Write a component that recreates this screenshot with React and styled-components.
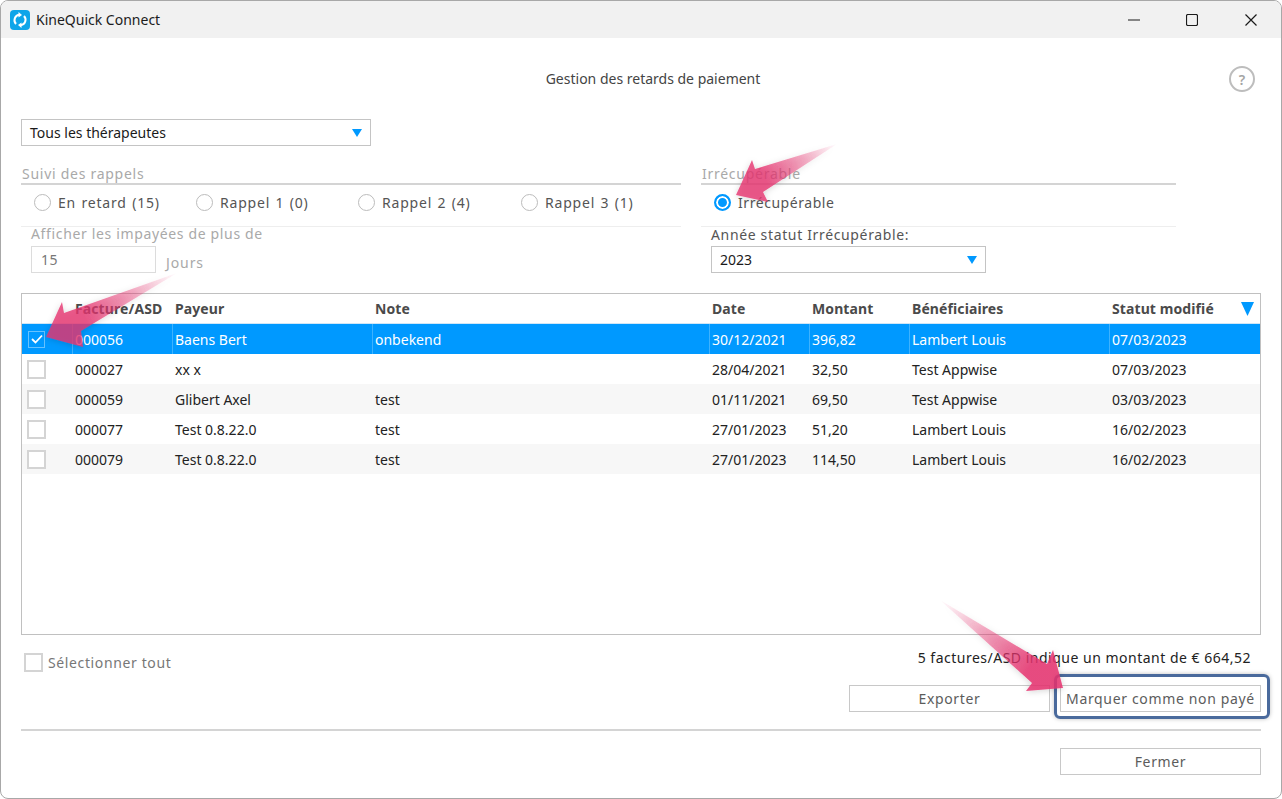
import React from 'react';
import styled, { createGlobalStyle } from 'styled-components';

const GlobalStyle = createGlobalStyle`
  html, body {
    margin: 0;
    padding: 0;
    background: #fff;
  }
  * {
    box-sizing: border-box;
  }
`;

const Win = styled.div`
  position: relative;
  width: 1282px;
  height: 799px;
  background: #fff;
  border: 1px solid #a8a8a8;
  border-radius: 8px;
  overflow: hidden;
  font-family: "Noto Sans", "Open Sans", sans-serif;
  font-size: 14px;
  color: #222;
`;

const TitleBar = styled.div`
  display: flex;
  align-items: center;
  height: 37px;
  padding-left: 9px;
  background: #f1f1f1;
`;

const AppName = styled.div`
  margin-left: 6px;
  font-size: 14px;
  color: #1c1c1c;
`;

const WinButtons = styled.div`
  display: flex;
  margin-left: auto;
  margin-right: 1px;
`;

const WinButton = styled.div`
  display: flex;
  align-items: center;
  justify-content: center;
  width: ${(p) => p.$width}px;
  height: 37px;
`;

const Body = styled.div`
  padding: 0 20px;
`;

const Heading = styled.div`
  position: relative;
  display: flex;
  justify-content: center;
  align-items: center;
  height: 20px;
  margin-top: 30px;
  padding-left: 24px;
  font-size: 14px;
  color: #444;
`;

const Help = styled.div`
  position: absolute;
  right: 6px;
  top: -2px;
  display: flex;
  align-items: center;
  justify-content: center;
  width: 26px;
  height: 26px;
  border: 2px solid #bdbdbd;
  border-radius: 50%;
  font-size: 14px;
  font-weight: 600;
  color: #a4a4a4;
`;

const Select = styled.div`
  display: flex;
  align-items: center;
  justify-content: space-between;
  width: ${(p) => p.$width}px;
  height: 27px;
  padding: 0 8px;
  background: #fff;
  border: 1px solid #c4c4c4;
  font-size: 14px;
  color: #1a1a1a;
`;

const Caret = styled.svg`
  display: block;
  flex: none;
`;

const TopSelect = styled.div`
  margin-top: 31px;
`;

const Filters = styled.div`
  display: flex;
  gap: 20px;
  margin-top: 18px;
  height: 109px;
`;

const Group = styled.div`
  width: ${(p) => p.$width}px;
`;

const GroupTitle = styled.div`
  height: 21px;
  padding-left: 1px;
  border-bottom: 2px solid #d4d4d4;
  font-size: 14px;
  line-height: 19px;
  letter-spacing: 0.73px;
  color: #a9a9a9;
`;

const RadioRow = styled.div`
  display: flex;
  align-items: center;
  height: 42px;
  padding: 0 0 6px 13px;
  border-bottom: 1px solid #eeeeee;
`;

const RadioItem = styled.div`
  display: flex;
  align-items: center;
  gap: 7px;
  width: ${(p) => p.$width}px;
  font-size: 14px;
  letter-spacing: ${(p) => (p.$wide ? '0.8px' : '0.55px')};
  word-spacing: ${(p) => (p.$wide ? '1px' : '0')};
  color: #555;
`;

const RadioDot = styled.span`
  display: block;
  flex: none;
  width: 17px;
  height: 17px;
  border-radius: 50%;
  border: ${(p) => (p.$on ? '2px solid #0099ff' : '1px solid #bcbcbc')};
  background: ${(p) => (p.$on ? '#0099ff' : '#fff')};
  box-shadow: ${(p) => (p.$on ? 'inset 0 0 0 2px #fff' : 'none')};
`;

const SubBlock = styled.div`
  padding-left: 10px;
`;

const SubLabel = styled.div`
  height: 19px;
  margin-top: ${(p) => p.$top}px;
  margin-bottom: ${(p) => p.$bottom}px;
  line-height: 19px;
  font-size: 14px;
  letter-spacing: 0.65px;
  color: ${(p) => (p.$dim ? '#a9a9a9' : '#555')};
`;

const DaysRow = styled.div`
  display: flex;
  align-items: flex-end;
  gap: 10px;
`;

const DaysInput = styled.div`
  display: flex;
  align-items: center;
  width: 125px;
  height: 27px;
  padding-left: 9px;
  border: 1px solid #dcdcdc;
  font-size: 14px;
  letter-spacing: 0.5px;
  color: #777;
`;

const DaysUnit = styled.div`
  height: 20px;
  font-size: 14px;
  letter-spacing: 0.9px;
  color: #a9a9a9;
`;

const Table = styled.div`
  height: 342px;
  margin-top: 20px;
  border: 1px solid #c0c0c0;
`;

const Row = styled.div`
  display: grid;
  grid-template-columns: 50px 100px 200px 337px 100px 100px 200px 1fr;
  height: 30px;
  background: ${(p) => (p.$selected ? '#0099ff' : p.$alt ? '#f7f7f7' : '#fff')};
  color: ${(p) => (p.$selected ? '#fff' : '#222')};
`;

const HeadRow = styled(Row)`
  border-bottom: 1px solid #cfe6f7;
`;

const HeadCell = styled.div`
  position: relative;
  display: flex;
  align-items: center;
  padding-left: 3px;
  font-size: 14px;
  font-weight: 700;
  letter-spacing: 0.1px;
  color: #4a4a4a;
`;

const SortMark = styled.div`
  position: absolute;
  right: 6px;
  top: 8px;
`;

const Cell = styled.div`
  display: flex;
  align-items: center;
  padding-left: 2px;
  font-size: 14px;
  border-left: 1px solid ${(p) => (p.$selected ? '#3db2ff' : 'transparent')};
`;

const CheckCell = styled.div`
  display: flex;
  align-items: center;
  padding-left: 5px;
`;

const Check = styled.div`
  display: flex;
  align-items: center;
  justify-content: center;
  flex: none;
  width: ${(p) => (p.$on ? 17 : 19)}px;
  height: ${(p) => (p.$on ? 17 : 19)}px;
  margin-left: ${(p) => (p.$on ? 1 : 0)}px;
  border: ${(p) => (p.$on ? '1px solid #66c2ff' : '2px solid #d4d4d4')};
  background: ${(p) => (p.$on ? 'transparent' : '#fff')};
`;

const Footer = styled.div`
  display: flex;
  justify-content: space-between;
  margin-top: 14px;
  height: 40px;
`;

const SelectAll = styled.div`
  display: flex;
  align-items: center;
  gap: 5px;
  height: 26px;
  padding-left: 3px;
  font-size: 14px;
  letter-spacing: 0.62px;
  color: #777;
`;

const Summary = styled.div`
  padding: 0 10px 0 0;
  font-size: 14px;
  letter-spacing: 0.5px;
  line-height: 17px;
  color: #222;
`;

const Actions = styled.div`
  display: flex;
  justify-content: flex-end;
  gap: 10px;
  margin-top: -4px;
`;

const Btn = styled.div`
  position: relative;
  display: flex;
  align-items: center;
  justify-content: center;
  width: 201px;
  height: 27px;
  background: #fff;
  border: 1px solid #c8c8c8;
  font-size: 14px;
  letter-spacing: 0.65px;
  white-space: nowrap;
  color: #5c5c5c;

  ${(p) => p.$focus && `
    &::after {
      content: '';
      position: absolute;
      inset: -12px -10px -8px -7px;
      border: 3px solid #4a6a9c;
      border-radius: 6px;
      box-shadow: 0 0 4px rgba(0, 0, 0, 0.25);
    }
  `}
`;

const Rule = styled.div`
  height: 2px;
  margin-top: 17px;
  background: #d4d4d4;
`;

const CloseRow = styled.div`
  display: flex;
  justify-content: flex-end;
  margin-top: 17px;
`;

const Overlay = styled.svg`
  position: absolute;
  left: -1px;
  top: -1px;
  pointer-events: none;
`;

const rows = [
  ['000056', 'Baens Bert', 'onbekend', '30/12/2021', '396,82', 'Lambert Louis', '07/03/2023'],
  ['000027', 'xx x', '', '28/04/2021', '32,50', 'Test Appwise', '07/03/2023'],
  ['000059', 'Glibert Axel', 'test', '01/11/2021', '69,50', 'Test Appwise', '03/03/2023'],
  ['000077', 'Test 0.8.22.0', 'test', '27/01/2023', '51,20', 'Lambert Louis', '16/02/2023'],
  ['000079', 'Test 0.8.22.0', 'test', '27/01/2023', '114,50', 'Lambert Louis', '16/02/2023'],
];

const heads = ['', 'Facture/ASD', 'Payeur', 'Note', 'Date', 'Montant', 'Bénéficiaires', 'Statut modifié'];

function DownCaret({ w, h }) {
  return (
    <Caret width={w} height={h} viewBox="0 0 12 11" preserveAspectRatio="none">
      <path d="M0 0 H12 L6 11 Z" fill="#0099ff" />
    </Caret>
  );
}

function Logo() {
  return (
    <svg width="20" height="20" viewBox="0 0 20 20">
      <rect width="20" height="20" rx="4" fill="#0ea5e9" />
      <path d="M6 14 A5.5 5.5 0 0 1 9 4.8" fill="none" stroke="#fff" strokeWidth="2" />
      <path d="M14 6 A5.5 5.5 0 0 1 11 15.2" fill="none" stroke="#fff" strokeWidth="2" />
      <path d="M8.5 2 L12 5 L8.5 7.5 Z" fill="#fff" />
      <path d="M11.5 18 L8 15 L11.5 12.5 Z" fill="#fff" />
    </svg>
  );
}

function Arrows() {
  return (
    <Overlay width="1282" height="799" viewBox="0 0 1282 799">
      <defs>
        <linearGradient id="fadeA" gradientUnits="userSpaceOnUse" x1="837" y1="144" x2="765" y2="178">
          <stop offset="0" stopColor="#e6336f" stopOpacity="0" />
          <stop offset="0.5" stopColor="#e6336f" stopOpacity="0.42" />
          <stop offset="1" stopColor="#e6336f" stopOpacity="0.8" />
        </linearGradient>
        <linearGradient id="fadeB" gradientUnits="userSpaceOnUse" x1="177" y1="273" x2="85" y2="318">
          <stop offset="0" stopColor="#e6336f" stopOpacity="0" />
          <stop offset="0.5" stopColor="#e6336f" stopOpacity="0.42" />
          <stop offset="1" stopColor="#e6336f" stopOpacity="0.8" />
        </linearGradient>
        <linearGradient id="fadeC" gradientUnits="userSpaceOnUse" x1="940" y1="600" x2="1030" y2="667">
          <stop offset="0" stopColor="#e6336f" stopOpacity="0" />
          <stop offset="0.5" stopColor="#e6336f" stopOpacity="0.42" />
          <stop offset="1" stopColor="#e6336f" stopOpacity="0.85" />
        </linearGradient>
        <filter id="soft" x="-20%" y="-20%" width="140%" height="140%">
          <feDropShadow dx="0" dy="1" stdDeviation="3" floodColor="#000" floodOpacity="0.2" />
        </filter>
      </defs>
      <polygon points="736,195 752,160 755,169 837,144 763,192 768,202" fill="url(#fadeA)" filter="url(#soft)" />
      <polygon points="46,337 62,302 64,313 177,273 81,331 83,347" fill="url(#fadeB)" filter="url(#soft)" />
      <polygon points="1063,688 1053,650 1047,664 940,600 1032,683 1026,691" fill="url(#fadeC)" filter="url(#soft)" />
    </Overlay>
  );
}

export default function App() {
  return (
    <Win>
      <GlobalStyle />
      <TitleBar>
        <Logo />
        <AppName>KineQuick Connect</AppName>
        <WinButtons>
          <WinButton $width={57}>
            <svg width="12" height="12" viewBox="0 0 12 12"><path d="M0 6 H12" stroke="#1a1a1a" strokeWidth="1.2" /></svg>
          </WinButton>
          <WinButton $width={59}>
            <svg width="12" height="12" viewBox="0 0 12 12"><rect x="0.5" y="0.5" width="11" height="11" rx="1.5" fill="none" stroke="#1a1a1a" strokeWidth="1.2" /></svg>
          </WinButton>
          <WinButton $width={59}>
            <svg width="12" height="12" viewBox="0 0 12 12"><path d="M0.5 0.5 L11.5 11.5 M11.5 0.5 L0.5 11.5" stroke="#1a1a1a" strokeWidth="1.2" /></svg>
          </WinButton>
        </WinButtons>
      </TitleBar>
      <Body>
        <Heading>
          Gestion des retards de paiement
          <Help>?</Help>
        </Heading>
        <TopSelect>
          <Select $width={350}>
            Tous les thérapeutes
            <DownCaret w={10} h={8} />
          </Select>
        </TopSelect>
        <Filters>
          <Group $width={660}>
            <GroupTitle>Suivi des rappels</GroupTitle>
            <RadioRow>
              <RadioItem $wide $width={162}><RadioDot />En retard (15)</RadioItem>
              <RadioItem $wide $width={162}><RadioDot />Rappel 1 (0)</RadioItem>
              <RadioItem $wide $width={163}><RadioDot />Rappel 2 (4)</RadioItem>
              <RadioItem $wide $width={140}><RadioDot />Rappel 3 (1)</RadioItem>
            </RadioRow>
            <SubBlock>
              <SubLabel $dim $top={-3} $bottom={3}>Afficher les impayées de plus de</SubLabel>
              <DaysRow>
                <DaysInput>15</DaysInput>
                <DaysUnit>Jours</DaysUnit>
              </DaysRow>
            </SubBlock>
          </Group>
          <Group $width={475}>
            <GroupTitle>Irrécupérable</GroupTitle>
            <RadioRow>
              <RadioItem $width={300}><RadioDot $on />Irrécupérable</RadioItem>
            </RadioRow>
            <SubBlock>
              <SubLabel $top={-2} $bottom={2}>Année statut Irrécupérable:</SubLabel>
              <Select $width={275}>
                2023
                <DownCaret w={10} h={8} />
              </Select>
            </SubBlock>
          </Group>
        </Filters>
        <Table>
          <HeadRow>
            {heads.map((h, i) => (
              <HeadCell key={i}>
                {h}
                {i === 7 && <SortMark><DownCaret w={13} h={14} /></SortMark>}
              </HeadCell>
            ))}
          </HeadRow>
          {rows.map((r, i) => (
            <Row key={r[0]} $selected={i === 0} $alt={i % 2 === 0}>
              <CheckCell>
                <Check $on={i === 0}>
                  {i === 0 && (
                    <svg width="12" height="10" viewBox="0 0 12 10"><path d="M1 5 L4.5 8.5 L11 1.5" fill="none" stroke="#fff" strokeWidth="1.8" /></svg>
                  )}
                </Check>
              </CheckCell>
              {r.map((c, j) => (
                <Cell key={j} $selected={i === 0}>{c}</Cell>
              ))}
            </Row>
          ))}
        </Table>
        <Footer>
          <SelectAll>
            <Check />
            Sélectionner tout
          </SelectAll>
          <Summary>5 factures/ASD indique un montant de € 664,52</Summary>
        </Footer>
        <Actions>
          <Btn>Exporter</Btn>
          <Btn $focus>Marquer comme non payé</Btn>
        </Actions>
        <Rule />
        <CloseRow>
          <Btn>Fermer</Btn>
        </CloseRow>
      </Body>
      <Arrows />
    </Win>
  );
}
